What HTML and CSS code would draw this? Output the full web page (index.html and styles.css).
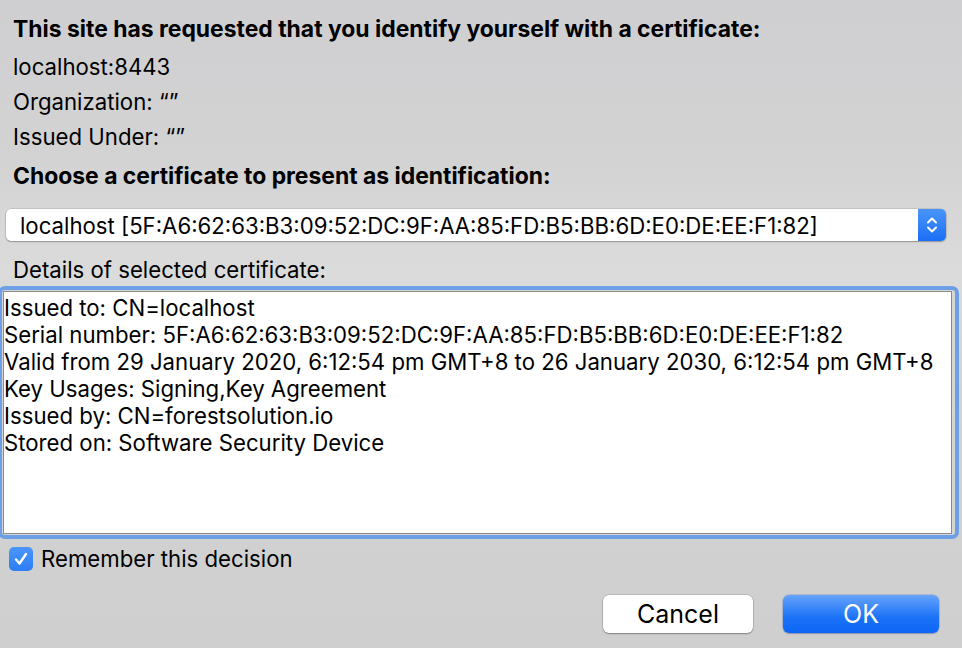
FILE: index.html
```html
<!DOCTYPE html>
<html>
<head>
<meta charset="utf-8">
<link rel="stylesheet" href="styles.css">
</head>
<body>
<div class="dialog">
  <div class="info">
    <p class="heading">This site has requested that you identify yourself with a certificate:</p>
    <p class="line first">localhost:8443</p>
    <p class="line">Organization: “”</p>
    <p class="line">Issued Under: “”</p>
    <p class="heading choose">Choose a certificate to present as identification:</p>
  </div>
  <div class="select">
    <span class="select-text">localhost [5F:A6:62:63:B3:09:52:DC:9F:AA:85:FD:B5:BB:6D:E0:DE:EE:F1:82]</span>
    <span class="stepper">
      <svg width="14" height="22" viewBox="0 0 14 22"><path d="M3 8.5 L7 4.5 L11 8.5 M3 13.5 L7 17.5 L11 13.5" fill="none" stroke="#fff" stroke-width="2" stroke-linecap="round" stroke-linejoin="round"/></svg>
    </span>
  </div>
  <p class="details-label">Details of selected certificate:</p>
  <div class="details-ring">
    <div class="details">
      <div>Issued to: CN=localhost</div>
      <div>Serial number: 5F:A6:62:63:B3:09:52:DC:9F:AA:85:FD:B5:BB:6D:E0:DE:EE:F1:82</div>
      <div>Valid from 29 January 2020, 6:12:54 pm GMT+8 to 26 January 2030, 6:12:54 pm GMT+8</div>
      <div>Key Usages: Signing,Key Agreement</div>
      <div>Issued by: CN=forestsolution.io</div>
      <div>Stored on: Software Security Device</div>
    </div>
  </div>
  <label class="remember">
    <span class="checkbox">
      <svg width="18" height="18" viewBox="0 0 18 18"><path d="M4 9.5 L7.5 13.5 L14 4" fill="none" stroke="#fff" stroke-width="2.4" stroke-linecap="round" stroke-linejoin="round"/></svg>
    </span>
    <span>Remember this decision</span>
  </label>
  <div class="buttons">
    <button class="btn cancel">Cancel</button>
    <button class="btn ok">OK</button>
  </div>
</div>
</body>
</html>
```

FILE: styles.css
```css
html, body {
  margin: 0;
  padding: 0;
  width: 962px;
  height: 648px;
  overflow: hidden;
}
body {
  font-family: Inter, "Liberation Sans", sans-serif;
  color: #000;
  background: linear-gradient(to bottom, #cfcfd1 0%, #d3d3d4 25%, #dbdbdb 42%, #d3d3d4 60%, #cfcfd0 100%);
}
p { margin: 0; }
.dialog {
  display: flex;
  flex-direction: column;
  height: 648px;
}
.info {
  padding: 16px 0 0 13px;
  display: flex;
  flex-direction: column;
  gap: 9px;
}
.heading {
  font-weight: 700;
  font-size: 22.9px;
  line-height: 26px;
}
.line {
  font-size: 22.2px;
  line-height: 26px;
}
.first { margin-top: 3px; }
.choose { margin-top: 4px; }
.select {
  margin: 20px 16px 0 6px;
  height: 32px;
  background: #fff;
  border-radius: 5px;
  box-shadow: 0 0 0 0.5px rgba(0,0,0,0.18), 0 1px 1.5px rgba(0,0,0,0.25);
  display: flex;
  align-items: center;
  overflow: hidden;
}
.select-text {
  flex: 1;
  padding-left: 14px;
  font-size: 22.2px;
  white-space: nowrap;
}
.stepper {
  width: 28px;
  height: 32px;
  background: linear-gradient(to bottom, #4b95f9, #1a6ff5);
  display: flex;
  align-items: center;
  justify-content: center;
}
.details-label {
  margin: 16px 0 0 13px;
  font-size: 22.2px;
  line-height: 26px;
}
.details-ring {
  margin: 3px 3px 0 -2px;
  border: 4px solid #6d9fe6;
  border-radius: 7px;
  height: 253px;
  box-sizing: border-box;
  padding: 1px 3px 1px 1px;
  background: #d6d6d7;
}
.details {
  height: 100%;
  box-sizing: border-box;
  background: #fff;
  border: 1px solid #8a8a8a;
  padding: 2px 0 0 0;
  font-size: 22.2px;
  line-height: 27px;
  white-space: nowrap;
  overflow: hidden;
}
.remember {
  margin: 8px 0 0 9px;
  display: flex;
  align-items: center;
  gap: 8px;
  font-size: 22.2px;
  line-height: 24px;
}
.checkbox {
  width: 24px;
  height: 24px;
  border-radius: 5px;
  background: linear-gradient(to bottom, #4a95fa, #2b7ef5);
  display: flex;
  align-items: center;
  justify-content: center;
}
.buttons {
  margin: 24px 23px 0 0;
  display: flex;
  justify-content: flex-end;
  gap: 30px;
}
.btn {
  font-family: inherit;
  font-size: 25px;
  height: 38px;
  border: none;
  border-radius: 6px;
  padding: 0;
}
.cancel {
  width: 150px;
  background: #fff;
  color: #000;
  box-shadow: 0 0 0 0.5px rgba(0,0,0,0.2), 0 1px 1.5px rgba(0,0,0,0.3);
}
.ok {
  width: 156px;
  color: #fff;
  background: linear-gradient(to bottom, #66a3fb, #1b72f7 60%, #0d66f5);
  box-shadow: 0 0 0 0.5px rgba(0,60,200,0.3), 0 1px 1.5px rgba(0,0,0,0.2);
}
```
